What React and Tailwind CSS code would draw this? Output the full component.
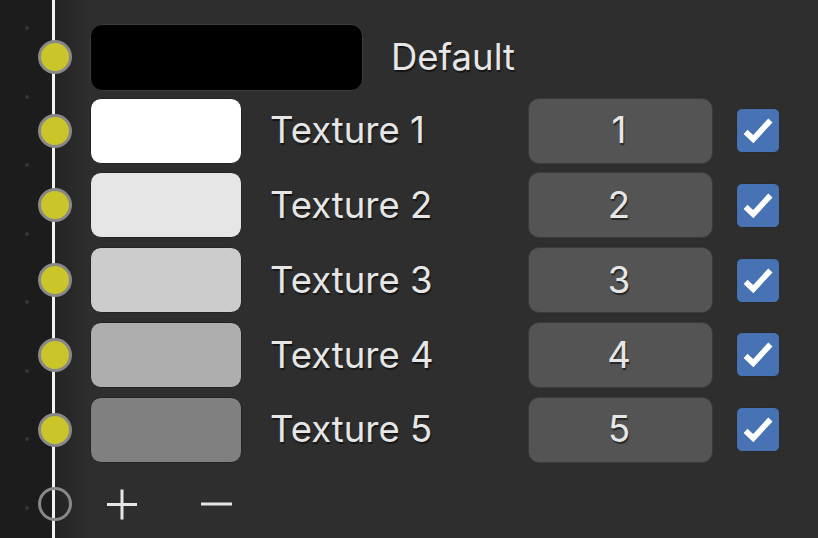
import React from 'react';

const textures = [
    { name: 'Texture 1', color: 'bg-[#ffffff]', index: 1 },
    { name: 'Texture 2', color: 'bg-[#e6e6e6]', index: 2 },
    { name: 'Texture 3', color: 'bg-[#cccccc]', index: 3 },
    { name: 'Texture 4', color: 'bg-[#aeaeae]', index: 4 },
    { name: 'Texture 5', color: 'bg-[#808080]', index: 5 },
];

const labelClass =
    'text-[36.5px] leading-none text-[#e6e6e6] [text-shadow:1px_1.5px_1px_rgba(0,0,0,0.55)]';

// Input socket sitting on the link line
const Socket = ({ filled = true }) => (
    <div
        className={`-ml-[17px] h-[34px] w-[34px] shrink-0 rounded-full border-[3px] border-[#888888] ${
            filled ? 'bg-[#c9c52a]' : 'bg-transparent'
        }`}
    />
);

const Checkbox = () => (
    <div className="flex h-[45px] w-[44px] shrink-0 items-center justify-center rounded-[6px] border border-[#2a2a2a] bg-[#4772b3]">
        <svg width="44" height="45" viewBox="0 0 44 45" fill="none">
            <polyline points="9,24 17,31.5 35,12" stroke="#ffffff" strokeWidth="6" strokeLinejoin="miter" />
        </svg>
    </div>
);

const TextureRow = ({ texture }) => (
    <div className="flex h-[65px] items-center">
        <Socket />
        <div className={`ml-[18px] h-[66px] w-[152px] shrink-0 rounded-[11px] border border-[#232323] ${texture.color}`} />
        <div className={`ml-[28px] w-[258px] shrink-0 ${labelClass}`}>{texture.name}</div>
        <div className="flex h-[66px] w-[185px] shrink-0 items-center justify-center rounded-[11px] border border-[#3a3a3a] bg-[#545454]">
            <span className={`-ml-[3px] ${labelClass}`}>{texture.index}</span>
        </div>
        <div className="ml-[23px]">
            <Checkbox />
        </div>
    </div>
);

export default function App() {
    return (
        <div
            className="flex h-[538px] w-[818px] overflow-hidden bg-[#2e2e2e]"
            style={{ fontFamily: 'Inter, "Noto Sans", sans-serif' }}
        >
            {/* canvas area left of the node, with grid dots */}
            <div className="flex w-[52px] shrink-0 flex-col items-center gap-[64.5px] bg-[#1c1c1c] pl-[2px] pt-[26px]">
                {Array.from({ length: 8 }).map((_, i) => (
                    <div key={i} className="h-[4px] w-[4px] rounded-full bg-[#353535]" />
                ))}
            </div>

            {/* link line */}
            <div className="w-[3px] shrink-0 bg-[#f2f2f2]" />

            {/* node body */}
            <div className="flex flex-1 flex-col bg-gradient-to-r from-[#242424] to-[#2e2e2e] to-[35px] pt-[24px]">
                <div className="flex h-[66px] items-center">
                    <Socket />
                    <div className="ml-[18px] h-[67px] w-[273px] shrink-0 rounded-[12px] border border-[#3c3c3c] bg-black" />
                    <div className={`ml-[28px] ${labelClass}`}>Default</div>
                </div>

                <div className="mt-[8px] flex flex-col gap-[9.8px]">
                    {textures.map((t) => (
                        <TextureRow key={t.index} texture={t} />
                    ))}
                </div>

                <div className="mt-[9px] flex h-[66px] items-center">
                    <Socket filled={false} />
                    <svg className="ml-[34px]" width="32" height="32" viewBox="0 0 32 32">
                        <path d="M1 16.5H31M16 1.5V31.5" stroke="#e6e6e6" strokeWidth="3" />
                    </svg>
                    <svg className="ml-[62px]" width="33" height="32" viewBox="0 0 33 32">
                        <path d="M1 16H32" stroke="#e6e6e6" strokeWidth="3" />
                    </svg>
                </div>
            </div>
        </div>
    );
}
